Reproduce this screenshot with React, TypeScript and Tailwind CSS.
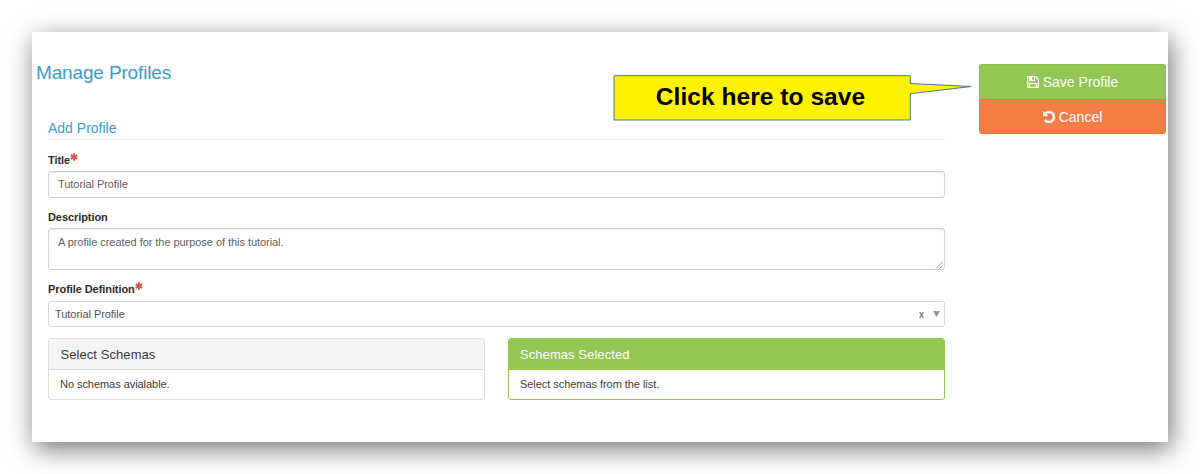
import type { ReactNode } from "react";

function SaveIcon() {
  return (
    <svg viewBox="128 128 1536 1536" className="h-[12px] w-[12px] shrink-0" fill="currentColor" stroke="currentColor" strokeWidth="40">
      <path d="M512 1536h768v-384h-768v384zm896 0h128v-896q0-14-10-38.5t-20-34.5l-281-281q-10-10-34-20t-39-10v416q0 40-28 68t-68 28h-576q-40 0-68-28t-28-68v-416h-128v1280h128v-416q0-40 28-68t68-28h832q40 0 68 28t28 68v416zm-384-928v-320q0-13-9.5-22.5t-22.5-9.5h-192q-13 0-22.5 9.5t-9.5 22.5v320q0 13 9.5 22.5t22.5 9.5h192q13 0 22.5-9.5t9.5-22.5zm640 32v928q0 40-28 68t-68 28h-1344q-40 0-68-28t-28-68v-1344q0-40 28-68t68-28h928q40 0 88 20t76 48l280 280q28 28 48 76t20 88z" />
    </svg>
  );
}

function UndoIcon() {
  return (
    <svg viewBox="128 128 1536 1536" className="h-[12px] w-[12px] shrink-0" fill="currentColor" stroke="currentColor" strokeWidth="60">
      <path d="M1664 896q0 156-61 298t-164 245-245 164-298 61q-172 0-327-72.5t-264-204.5q-7-10-6.5-22.5t8.5-20.5l137-138q10-9 25-9 16 2 23 12 73 95 179 147t225 52q104 0 198.5-40.5t163.5-109.5 109.5-163.5 40.5-198.5-40.5-198.5-109.5-163.5-163.5-109.5-198.5-40.5q-98 0-188 35.5t-160 101.5l137 138q31 30 14 69-17 40-59 40h-448q-26 0-45-19t-19-45v-448q0-42 40-59 39-17 69 14l130 129q107-101 244.5-156.5t284.5-55.5q156 0 298 61t245 164 164 245 61 298z" />
    </svg>
  );
}

function Label({ children, required }: { children: ReactNode; required?: boolean }) {
  return (
    <div className="flex h-4 items-center text-[11px] font-bold leading-4 tracking-[-0.07px] text-[#2b2b2b]">
      <span>{children}</span>
      {required && (
        <svg viewBox="0 0 8 8" className="mb-[7px] h-2 w-2" stroke="#d9534f" strokeWidth="2">
          <path d="M4 0.2v7.6M0.7 2.1l6.6 3.8M7.3 2.1L0.7 5.9" />
        </svg>
      )}
    </div>
  );
}

export default function App() {
  return (
    <div className="h-[474px] w-[1200px] overflow-hidden bg-white p-8 font-['Liberation_Sans',Arial,sans-serif]">
      <div className="relative flex h-[410px] w-[1136px] bg-white shadow-[3px_7px_24px_rgba(0,0,0,0.55)]">
        <main className="ml-1 w-[909px] pt-[29px]">
          <h1 className="h-6 text-[19px] leading-6 tracking-[-0.15px] text-[#3a9bd0]">Manage Profiles</h1>
          <section className="ml-3 mt-[34px] w-[897px]">
            <h2 className="h-[21px] border-b border-[#e9e9e9] text-[14px] leading-[18px] text-[#3a9bd0]">Add Profile</h2>
            <div className="mt-3">
              <Label required>Title</Label>
              <div className="mt-[3px] flex h-[27px] items-center rounded-[3px] border border-[#d0d0d0] px-[9px] text-[11px] tracking-[-0.05px] text-[#606060] shadow-[inset_0_1px_1px_rgba(0,0,0,0.07)]">
                Tutorial Profile
              </div>
            </div>
            <div className="mt-[11px]">
              <Label>Description</Label>
              <div className="relative mt-[3px] h-[42px] rounded-[3px] border border-[#d0d0d0] px-[9px] pt-[5px] text-[11px] leading-4 tracking-[-0.05px] text-[#606060] shadow-[inset_0_1px_1px_rgba(0,0,0,0.07)]">
                A profile created for the purpose of this tutorial.
                <svg viewBox="0 0 8 8" className="absolute bottom-0 right-px h-2 w-2" stroke="#777" strokeWidth="0.8">
                  <path d="M1 7.5L7.5 1M4.5 7.5l3-3" />
                </svg>
              </div>
            </div>
            <div className="mt-[11px]">
              <Label required>Profile Definition</Label>
              <div className="mt-1 flex h-[26px] items-center rounded-[3px] border border-[#d9d9d9] pl-1.5 pr-1 text-[11px] tracking-[-0.05px] text-[#505050]">
                <span className="grow">Tutorial Profile</span>
                <span className="mr-[9px] text-[10px] text-[#444]">x</span>
                <svg viewBox="0 0 7 6" className="h-1.5 w-[7px]" fill="#999">
                  <path d="M0 0h7L3.5 6z" />
                </svg>
              </div>
            </div>
            <div className="mt-[11px] flex justify-between">
              <div className="h-[62px] w-[437px] overflow-hidden rounded-[3px] border border-[#dddddd]">
                <div className="h-[31px] border-b border-[#dddddd] bg-[#f4f4f4] px-[11.5px] text-[13px] leading-[31px] tracking-[0.07px] text-[#3c3c3c]">Select Schemas</div>
                <div className="px-[11px] text-[11px] leading-[29px] tracking-[-0.05px] text-[#3c3c3c]">No schemas avialable.</div>
              </div>
              <div className="h-[62px] w-[437px] overflow-hidden rounded-[3px] border border-[#93c654]">
                <div className="h-[31px] border-b border-[#93c654] bg-[#93c654] px-[11px] text-[13px] leading-[31px] tracking-[0.07px] text-white">Schemas Selected</div>
                <div className="px-[11px] text-[11px] leading-[29px] tracking-[-0.05px] text-[#3c3c3c]">Select schemas from the list.</div>
              </div>
            </div>
          </section>
        </main>
        <aside className="ml-[34px] mt-8 flex w-[187px] flex-col text-[14px] text-white">
          <button className="flex h-[35px] items-center justify-center gap-1 rounded-t-[3px] border border-b-0 border-[#8bc04a] bg-[#93c654]">
            <SaveIcon />
            Save Profile
          </button>
          <button className="flex h-[35px] items-center justify-center gap-1 rounded-b-[3px] border border-[#f2733b] bg-[#f47c45] pt-px">
            <UndoIcon />
            Cancel
          </button>
        </aside>
        <div className="absolute left-[581px] top-[43px] h-[46px] w-[360px]">
          <svg viewBox="0 0 360 46" className="absolute inset-0 h-full w-full">
            <path d="M1 0.7H297.3V8.5L358 11.5L297.3 18.7V45H1Z" fill="#fff200" stroke="#4778a0" strokeWidth="1" />
          </svg>
          <div className="relative flex h-[44px] w-[295px] items-center justify-center text-[24.5px] font-bold tracking-[0.05px] text-black">
            Click here to save
          </div>
        </div>
      </div>
    </div>
  );
}
